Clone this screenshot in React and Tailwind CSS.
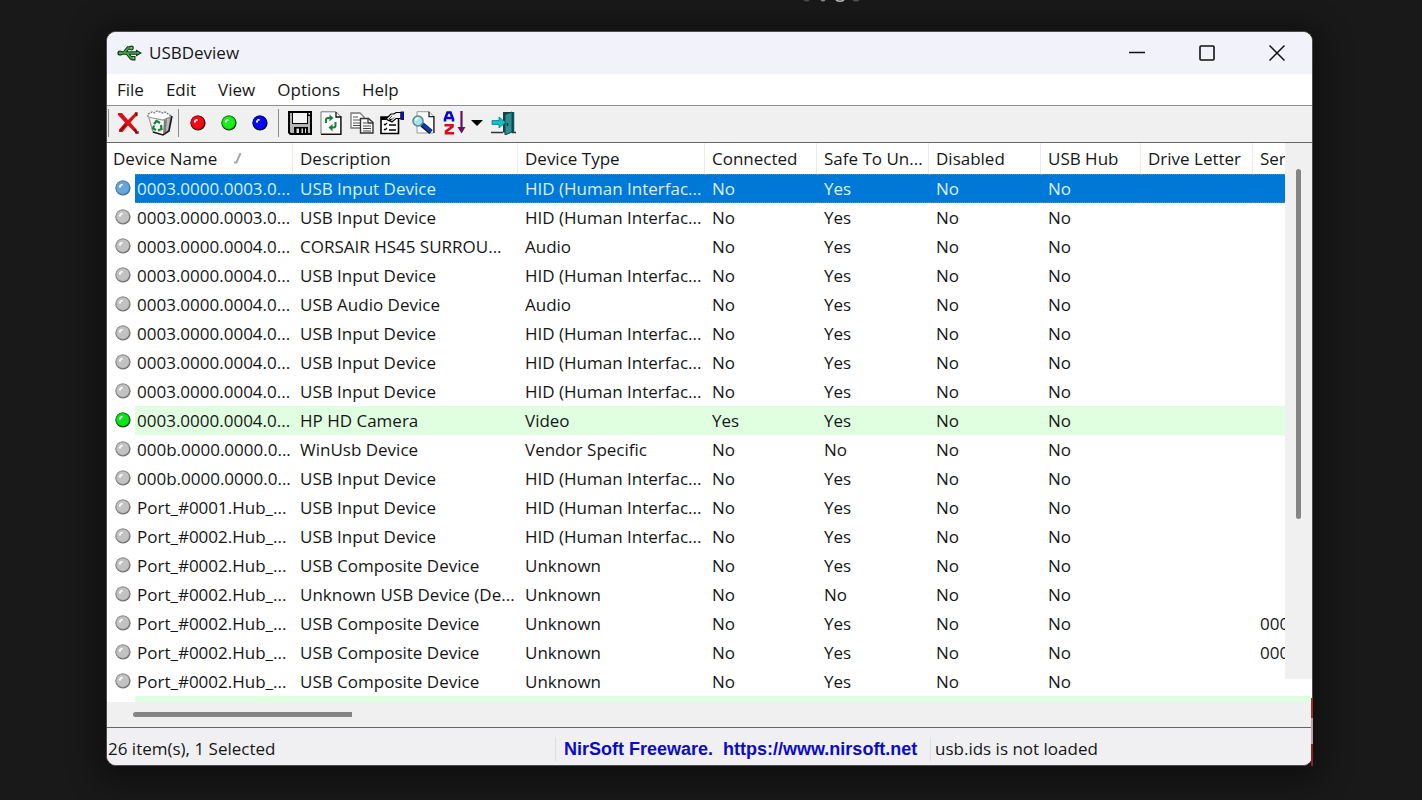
import clsx from 'clsx';

const HID = 'HID (Human Interfac...';

const devices = [
  { name: '0003.0000.0003.0...', description: 'USB Input Device', type: HID, connected: 'No', safe: 'Yes', selected: true },
  { name: '0003.0000.0003.0...', description: 'USB Input Device', type: HID, connected: 'No', safe: 'Yes' },
  { name: '0003.0000.0004.0...', description: 'CORSAIR HS45 SURROU...', type: 'Audio', connected: 'No', safe: 'Yes' },
  { name: '0003.0000.0004.0...', description: 'USB Input Device', type: HID, connected: 'No', safe: 'Yes' },
  { name: '0003.0000.0004.0...', description: 'USB Audio Device', type: 'Audio', connected: 'No', safe: 'Yes' },
  { name: '0003.0000.0004.0...', description: 'USB Input Device', type: HID, connected: 'No', safe: 'Yes' },
  { name: '0003.0000.0004.0...', description: 'USB Input Device', type: HID, connected: 'No', safe: 'Yes' },
  { name: '0003.0000.0004.0...', description: 'USB Input Device', type: HID, connected: 'No', safe: 'Yes' },
  { name: '0003.0000.0004.0...', description: 'HP HD Camera', type: 'Video', connected: 'Yes', safe: 'Yes' },
  { name: '000b.0000.0000.0...', description: 'WinUsb Device', type: 'Vendor Specific', connected: 'No', safe: 'No' },
  { name: '000b.0000.0000.0...', description: 'USB Input Device', type: HID, connected: 'No', safe: 'Yes' },
  { name: 'Port_#0001.Hub_...', description: 'USB Input Device', type: HID, connected: 'No', safe: 'Yes' },
  { name: 'Port_#0002.Hub_...', description: 'USB Input Device', type: HID, connected: 'No', safe: 'Yes' },
  { name: 'Port_#0002.Hub_...', description: 'USB Composite Device', type: 'Unknown', connected: 'No', safe: 'Yes' },
  { name: 'Port_#0002.Hub_...', description: 'Unknown USB Device (De...', type: 'Unknown', connected: 'No', safe: 'No' },
  { name: 'Port_#0002.Hub_...', description: 'USB Composite Device', type: 'Unknown', connected: 'No', safe: 'Yes', serial: '000' },
  { name: 'Port_#0002.Hub_...', description: 'USB Composite Device', type: 'Unknown', connected: 'No', safe: 'Yes', serial: '000' },
  { name: 'Port_#0002.Hub_...', description: 'USB Composite Device', type: 'Unknown', connected: 'No', safe: 'Yes' },
];

const headers = ['Description', 'Device Type', 'Connected', 'Safe To Un...', 'Disabled', 'USB Hub', 'Drive Letter', 'Ser'];

function Ball({ fill, edge, rim }) {
  return (
    <svg width="16" height="16" viewBox="0 0 16 16" className="block">
      <circle cx="8" cy="8" r="7.6" fill={edge} />
      <circle cx="7.6" cy="7.5" r="7" fill={rim} />
      <circle cx="7.8" cy="7.7" r="6.2" fill={fill} />
      <path d="M4 5.5h1.4V4h2.2v1.8H6v1.6H4z" fill="#fff" />
    </svg>
  );
}

function UsbIcon() {
  return (
    <svg width="25" height="18" viewBox="0 0 25 18" className="block">
      <g fill="none" stroke="#16301a" strokeWidth="3.4">
        <path d="M3 9h17M7 9l4-5h4M10 9l4 5h2" />
      </g>
      <path d="M19 5.500l6 3.500-6 3.500z" fill="#16301a" />
      <circle cx="3" cy="9" r="2.6" fill="#16301a" />
      <circle cx="14.5" cy="4" r="2.4" fill="#16301a" />
      <path d="M14.5 12h4v4.500h-4z" fill="#16301a" />
      <path d="M3 9h17M7 9l4-5h4M10 9l4 5h2" fill="none" stroke="#3fae4a" strokeWidth="1.5" />
      <path d="M20 7.500l3 1.500-3 1.500z" fill="#3fae4a" />
      <circle cx="3.2" cy="9" r="1.6" fill="#3fae4a" />
      <circle cx="14.5" cy="4" r="1.2" fill="#6fcf79" />
      <path d="M15.600 13h1.800v2.200h-1.800z" fill="#6fcf79" />
    </svg>
  );
}

function DeleteIcon() {
  return (
    <svg width="24" height="24" viewBox="0 0 24 24">
      <path d="M1 2h4l6 7 7-7h2v2l-6.500 7.500L20 19v3h-1.500L11 14.500 5.500 21H2v-2.500l6-7L1 4z" fill="#dc0f18" />
      <path d="M18 2h2v2l-1 1M17 18l2 2v2h2v-2M8.500 14l-5 6" fill="none" stroke="#6d0808" strokeWidth="1.300" />
    </svg>
  );
}

function RecycleIcon() {
  return (
    <svg width="26" height="26" viewBox="0 0 26 26">
      <path d="M2 7l15 2-1 16L6 22z" fill="#f4f4f4" />
      <path d="M17 9l8-3-3 15-6 4z" fill="#7d7d7d" />
      <path d="M20 9l3-1-2 12-2 1z" fill="#bdbdbd" />
      <path d="M1 7V4l4-2 2 1 3-2 3 1 3 1 2-1 3 2 3 2-6 3z" fill="#fff" />
      <path d="M1 7V4l4-2 2 1 3-2 3 1 3 1 2-1 3 2 3 2" fill="none" stroke="#7f7f7f" strokeWidth="1.400" strokeDasharray="2 1" />
      <path d="M1 7l15 3 9-4M2 8l4 14" fill="none" stroke="#9a9a9a" strokeWidth="1.200" />
      <path d="M6 22l10 3 6-4 3-15" fill="none" stroke="#161616" strokeWidth="1.500" />
      <path d="M7 14l2.500-3 3.500 2M14 15l.5 4-3.500 1.500M9 20l-3-1.500 1-3" fill="none" stroke="#18803c" strokeWidth="2.200" />
    </svg>
  );
}

function SaveIcon() {
  return (
    <svg width="24" height="24" viewBox="0 0 24 24">
      <path d="M0 0h24v24H2L0 22z" fill="#000" />
      <path d="M2 2h2v11h16V5h2v17h-2v-6H6v6H3l-1-1z" fill="#b4b4b4" />
      <path d="M5 2h14v10H5z" fill="#f4f4f4" />
      <path d="M20.500 2H22v1.500h-1.500z" fill="#fff" />
      <path d="M7 16h12v6H7z" fill="#000" />
      <path d="M8.500 17.500H11V22H8.500zM13.500 17.500H15V22h-1.500zM17 17.500h1V22h-1z" fill="#d8d8d8" />
    </svg>
  );
}

function RefreshIcon() {
  return (
    <svg width="22" height="24" viewBox="0 0 22 24">
      <path d="M1 .8h15l4.500 4.500V23H1z" fill="#fafafa" stroke="#777" />
      <path d="M16 1v5h5M21 5v18.300H1" fill="none" stroke="#111" strokeWidth="1.300" />
      <path d="M6 12V9q0-2 2-2h2" fill="none" stroke="#16833d" strokeWidth="2" />
      <path d="M9.500 3.500l4 3.500-4 3.500z" fill="#16833d" />
      <path d="M15.500 11v3.500q0 2-2 2H12" fill="none" stroke="#16833d" strokeWidth="2" />
      <path d="M12.500 13l-4 3.500 4 4z" fill="#16833d" />
    </svg>
  );
}

function CopyIcon() {
  return (
    <svg width="24" height="22" viewBox="0 0 24 22">
      <path d="M1 1h9l4 4v11H1z" fill="#fff" stroke="#777" strokeWidth="1.300" />
      <path d="M3 5h5M3 8h8M3 11h8M3 13.500h8" stroke="#555" />
      <path d="M10.500 6.500h8l4.500 4V21H10.500z" fill="#fff" stroke="#333" strokeWidth="1.400" />
      <path d="M18 6.500v4.500h5" fill="none" stroke="#333" strokeWidth="1.300" />
      <path d="M13 11h4M13 14h8M13 16.500h8M13 19h8" stroke="#444" />
    </svg>
  );
}

function PropertiesIcon() {
  return (
    <svg width="25" height="24" viewBox="0 0 25 24">
      <path d="M1 6h17.500v16.500H1z" fill="#fff" stroke="#000" strokeWidth="1.600" />
      <path d="M1 6h7v3H1z" fill="#000" />
      <path d="M4 13l1 1 2-2M4 18l1 1 2-2" fill="none" stroke="#000" strokeWidth="1.200" />
      <path d="M9 14h7M9 19h7" stroke="#000" strokeWidth="1.600" />
      <path d="M6 8l5-5h3l2-1.500h5v6h-5l-4 3.500-2-1 1.500-2-3 1.500z" fill="#f2f2f2" stroke="#000" strokeWidth="1.200" />
      <path d="M9 8l3-3M11 9.500l3-3" stroke="#555" />
      <path d="M20.500 .5h3.500v8.500h-3.500z" fill="#0c1590" />
    </svg>
  );
}

function FindIcon() {
  return (
    <svg width="24" height="24" viewBox="0 0 24 24">
      <path d="M5 .7h12l4.500 4.500V22H5z" fill="#fafafa" stroke="#999" />
      <path d="M17 .7v5h5V22" fill="none" stroke="#222" strokeWidth="1.300" />
      <path d="M10 13.500l9 7.500" stroke="#04133f" strokeWidth="5" />
      <path d="M10 13l9 7.500" stroke="#0a3fb0" strokeWidth="3" />
      <circle cx="6" cy="10" r="5" fill="#a5e3ec" stroke="#50888f" strokeWidth="1.500" />
      <path d="M3.500 10q0-3 3-3" fill="none" stroke="#fff" strokeWidth="1.500" />
    </svg>
  );
}

function SortIcon() {
  return (
    <svg width="24" height="24" viewBox="0 0 24 24">
      <path d="M2 10.500V8l2.500-6.500h3L10 8v2.500M3.500 7h5" fill="none" stroke="#0808c8" strokeWidth="2.600" />
      <path d="M1.500 14.200h8v1.300L3 20.500v1.800h8" fill="none" stroke="#d0101c" strokeWidth="2.600" />
      <path d="M18.500 0v20" stroke="#6b0d68" strokeWidth="2.200" />
      <path d="M14.500 16h8l-4 6.500z" fill="#6b0d68" />
    </svg>
  );
}

function ExitIcon() {
  return (
    <svg width="25" height="24" viewBox="0 0 25 24">
      <path d="M0 21.500h12M21 21.500h4" stroke="#333" strokeWidth="1.300" />
      <path d="M12 1h11v20.500H12z" fill="#193f40" />
      <path d="M14 3.500L21 1v20l-7 3z" fill="#2d8f90" stroke="#0a4c4d" />
      <path d="M22.500 1v20.500" stroke="#0f5758" strokeWidth="1.500" />
      <path d="M1 9.500h7V6l6.500 5.500L8 17v-3.500H1z" fill="#10c0cc" stroke="#067d88" strokeWidth=".8" />
      <path d="M16.500 12v3" stroke="#062f30" strokeWidth="1.500" />
    </svg>
  );
}

function ToolButton({ label, children }) {
  return (
    <button aria-label={label} className="flex h-8 w-[31px] shrink-0 items-center justify-center">
      {children}
    </button>
  );
}

function Separator() {
  return <div className="mx-[3px] h-7 w-px shrink-0 bg-[#8c8c8c]" />;
}

function DeviceRow({ device }) {
  const { selected } = device;
  const active = device.connected === 'Yes';
  const cell = clsx(
    'overflow-hidden whitespace-nowrap p-0 pl-[7px] pt-px',
    selected && 'border-y border-dotted border-[#5c8db8] bg-[#0078d7] text-[#d9f1ff]',
    active && 'bg-[#e0ffe0]'
  );

  return (
    <tr className="h-[29px]">
      <td className="p-0 pb-px pl-2">
        {selected && <Ball fill="#67a7d8" rim="#4c8cbe" edge="#3c749f" />}
        {active && <Ball fill="#0be51a" rim="#0a9c12" edge="#064d0a" />}
        {!selected && !active && <Ball fill="#c2c2c2" rim="#999999" edge="#707070" />}
      </td>
      <td
        className={clsx(
          'overflow-hidden whitespace-nowrap p-0 pl-0.5 pt-px',
          selected && 'border-y border-dotted border-[#5c8db8] bg-[#0078d7] text-[#d9f1ff]',
          active && 'bg-[#e0ffe0]'
        )}
      >
        {device.name}
      </td>
      <td className={cell}>{device.description}</td>
      <td className={cell}>{device.type}</td>
      <td className={cell}>{device.connected}</td>
      <td className={cell}>{device.safe}</td>
      <td className={cell}>No</td>
      <td className={cell}>No</td>
      <td className={cell}></td>
      <td className={cell}>{device.serial}</td>
    </tr>
  );
}

function App() {
  return (
    <div className="relative min-h-screen bg-[#191919] pb-8 pl-[106px] pr-[109px] pt-[31px] font-['Open_Sans','Noto_Sans',sans-serif] text-[17px] leading-6 text-[#161616]">
      {/* Lower edge of the caption cut off at the top of the screen */}
      <svg width="64" height="4" viewBox="0 0 64 4" className="absolute left-[800px] top-0" fill="none" strokeWidth="1.500">
        <path d="M4 0q2 1.500 5 0M53 0q3 1.500 6 0" stroke="#4d4d4d" />
        <path d="M21 0q2 1.500 4 0" stroke="#8a8a8a" />
        <path d="M36 0q4 2.500 8 0" stroke="#b5b5b5" />
      </svg>

      <div className="relative">
        <div className="overflow-hidden rounded-[10px] border border-[#4a4a4a] bg-white shadow-[0_6px_30px_10px_rgba(0,0,0,0.4)]">
          {/* Title bar */}
          <header className="flex h-[42px] items-center bg-[#f2f3fa] pl-2.5">
            <UsbIcon />
            <h1 className="ml-[7px] flex-1">USBDeview</h1>
            <button aria-label="Minimize" className="flex h-full w-[70px] items-center justify-center">
              <svg width="16" height="16" viewBox="0 0 16 16" fill="none" stroke="#111" strokeWidth="1.300">
                <path d="M0 7.500h16" />
              </svg>
            </button>
            <button aria-label="Maximize" className="flex h-full w-[70px] items-center justify-center">
              <svg width="16" height="16" viewBox="0 0 16 16" fill="none" stroke="#111" strokeWidth="1.600">
                <rect x="1" y="1" width="14" height="14" rx="1" />
              </svg>
            </button>
            <button aria-label="Close" className="flex h-full w-[70px] items-center justify-center">
              <svg width="16" height="16" viewBox="0 0 16 16" fill="none" stroke="#111" strokeWidth="1.500">
                <path d="M.5 .5l15 15M15.500 .5l-15 15" />
              </svg>
            </button>
          </header>

          {/* Menu */}
          <nav className="flex h-8 items-center gap-[22px] border-b border-[#8f8f8f] pl-2.5 pt-px">
            <button>File</button>
            <button>Edit</button>
            <button>View</button>
            <button>Options</button>
            <button>Help</button>
          </nav>

          {/* Toolbar */}
          <div className="flex h-[37px] items-center border-b border-[#666] bg-[#f0f0f0] pb-[3px] pl-px">
            <div className="mr-1 h-7 w-px bg-[#8c8c8c]" />
            <ToolButton label="Uninstall"><DeleteIcon /></ToolButton>
            <ToolButton label="Clean up"><RecycleIcon /></ToolButton>
            <Separator />
            <ToolButton label="Disconnect"><Ball fill="#f20a14" rim="#b00810" edge="#2a0204" /></ToolButton>
            <ToolButton label="Enable"><Ball fill="#18ee18" rim="#10a010" edge="#063206" /></ToolButton>
            <ToolButton label="Disable"><Ball fill="#0808f0" rim="#0606a8" edge="#02022a" /></ToolButton>
            <Separator />
            <div className="flex items-center pl-0.5">
              <ToolButton label="Save"><SaveIcon /></ToolButton>
              <ToolButton label="Refresh"><RefreshIcon /></ToolButton>
              <ToolButton label="Copy"><CopyIcon /></ToolButton>
              <ToolButton label="Properties"><PropertiesIcon /></ToolButton>
              <ToolButton label="Find"><FindIcon /></ToolButton>
              <ToolButton label="Sort"><SortIcon /></ToolButton>
              <button aria-label="Sort options" className="flex h-8 w-[18px] items-center pl-px">
                <svg width="12" height="6" viewBox="0 0 12 6">
                  <path d="M0 0h12L6 6z" fill="#000" />
                </svg>
              </button>
              <ToolButton label="Exit"><ExitIcon /></ToolButton>
            </div>
          </div>

          {/* Device list */}
          <div className="flex items-start">
            <div className="min-w-0 flex-1 overflow-hidden">
              <table className="w-full table-fixed border-separate border-spacing-0">
                <colgroup>
                  <col className="w-7" />
                  <col className="w-[158px]" />
                  <col className="w-[225px]" />
                  <col className="w-[187px]" />
                  <col className="w-28" />
                  <col className="w-28" />
                  <col className="w-28" />
                  <col className="w-[100px]" />
                  <col className="w-28" />
                  <col />
                </colgroup>
                <thead>
                  <tr className="h-[31px] text-left">
                    <th colSpan={2} className="border-r border-[#ececec] p-0 pl-1.5 pt-px font-normal">
                      <span className="flex items-center gap-4 whitespace-nowrap">
                        Device Name
                        <svg width="10" height="12" viewBox="0 0 10 12">
                          <path d="M1 9.500h2.500L7.500 0" fill="none" stroke="#a8a8a8" strokeWidth="2" />
                        </svg>
                      </span>
                    </th>
                    {headers.map((header) => (
                      <th
                        key={header}
                        className="overflow-hidden whitespace-nowrap border-r border-[#ececec] p-0 pl-[7px] pt-px font-normal last:border-r-0"
                      >
                        {header}
                      </th>
                    ))}
                  </tr>
                </thead>
                <tbody>
                  {devices.map((device, index) => (
                    <DeviceRow key={index} device={device} />
                  ))}
                </tbody>
              </table>
            </div>
            <div className="flex h-[536px] w-[27px] justify-center bg-[#f0f0f0] pt-[26px]">
              <div className="h-[350px] w-[5px] rounded-full bg-[#858585]" />
            </div>
          </div>
          <div className="ml-7 h-1.5 bg-[#e0ffe0]" />
          <div className="flex h-[26px] items-center border-b border-[#666] bg-[#f0f0f0] pl-[26px]">
            <div className="h-[5px] w-[219px] rounded-l-full bg-[#858585]" />
          </div>

          {/* Status bar */}
          <footer className="flex h-[37px] items-center bg-[#f0f0f2] pt-1">
            <span className="w-[448px] whitespace-nowrap pl-px">26 item(s), 1 Selected</span>
            <a
              href="https://www.nirsoft.net"
              className="w-[376px] whitespace-pre border-x border-[#dedede] pl-2 font-['Liberation_Sans',Arial,sans-serif] text-lg leading-6 font-bold text-[#0b0bc8]"
            >
              {'NirSoft Freeware.  https://www.nirsoft.net'}
            </a>
            <span className="whitespace-nowrap pl-1">usb.ids is not loaded</span>
          </footer>
        </div>
        <div className="absolute bottom-0 right-0 flex h-[68px] w-0.5 flex-col">
          <div className="h-5 bg-[#a52a2a]" />
          <div className="h-[26px] bg-[#b9a5a5]" />
          <div className="flex-1 bg-[#8f2323]" />
        </div>
      </div>
    </div>
  );
}

export default App;
